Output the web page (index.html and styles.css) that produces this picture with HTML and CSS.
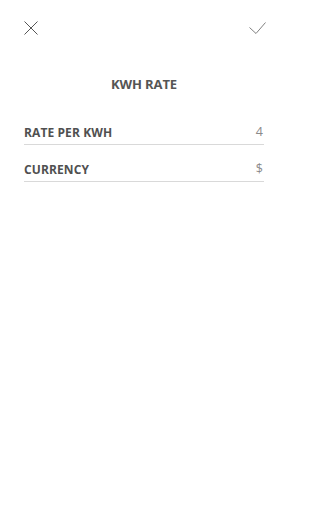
FILE: index.html
```html
<!DOCTYPE html>
<html>
<head>
<meta charset="utf-8">
<link rel="stylesheet" href="styles.css">
</head>
<body>
<div class="screen">
  <header class="topbar">
    <button class="icon-btn" aria-label="Close">
      <svg width="14" height="14" viewBox="0 0 14 14"><path d="M0.5 0.5 L13.5 13.5 M13.5 0.5 L0.5 13.5" stroke="#555" stroke-width="1" fill="none"/></svg>
    </button>
    <button class="icon-btn" aria-label="Save">
      <svg width="17" height="12" viewBox="0 0 17 12"><path d="M0.5 5.5 L7 11.5 L16.5 0.5" stroke="#808080" stroke-width="1" fill="none"/></svg>
    </button>
  </header>
  <h1 class="title">KWH RATE</h1>
  <div class="form">
    <div class="row">
      <span class="label">RATE PER KWH</span>
      <span class="value">4</span>
    </div>
    <div class="row">
      <span class="label">CURRENCY</span>
      <span class="value">$</span>
    </div>
  </div>
</div>
</body>
</html>
```
FILE: styles.css
```css
html, body {
  margin: 0;
  padding: 0;
  background: #fff;
}
.screen {
  width: 288px;
  height: 512px;
  font-family: "Open Sans", "Liberation Sans", sans-serif;
  color: #555;
}
.topbar {
  display: flex;
  justify-content: space-between;
  align-items: center;
  padding: 21px 22px 0 24px;
  height: 14px;
}
.icon-btn {
  border: 0;
  background: none;
  padding: 0;
  margin: 0;
  display: flex;
  line-height: 0;
}
.title {
  margin: 40px 0 0;
  text-align: center;
  font-size: 13px;
  font-weight: 700;
  line-height: 18px;
  color: #555;
  letter-spacing: -0.1px;
}
.form {
  margin: 27px 24px 0;
}
.row {
  display: flex;
  justify-content: space-between;
  align-items: flex-end;
  height: 36px;
  border-bottom: 1px solid #d9d9d9;
}
.row:first-child {
  height: 24px;
}
.label {
  font-size: 12px;
  font-weight: 700;
  color: #505050;
  line-height: 16px;
  padding-bottom: 3px;
  letter-spacing: 0.1px;
}
.value {
  font-size: 12.5px;
  font-weight: 400;
  color: #8a8a8a;
  line-height: 16px;
  padding-bottom: 4px;
  padding-right: 1px;
}
```
